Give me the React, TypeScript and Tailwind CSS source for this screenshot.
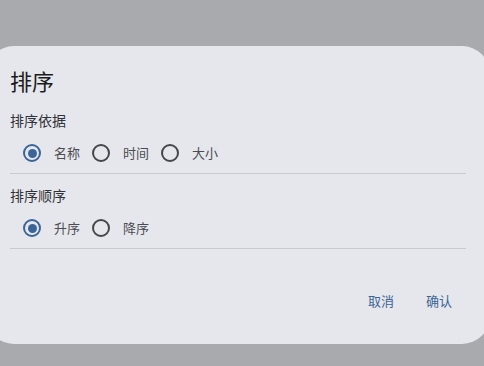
import { useState } from 'react';

const font = { fontFamily: '"Noto Sans CJK SC", "Noto Sans", sans-serif' };

function Radio({ label, checked, onSelect }: { label: string; checked: boolean; onSelect: () => void }) {
  return (
    <button type="button" onClick={onSelect} className="flex items-center h-10">
      <span className="w-10 h-10 flex items-center justify-center">
        <span
          className={
            'w-[18px] h-[18px] rounded-full border-2 flex items-center justify-center ' +
            (checked ? 'border-[#3b6598]' : 'border-[#45474d]')
          }
        >
          {checked && <span className="w-[9px] h-[9px] rounded-full bg-[#3b6598]" />}
        </span>
      </span>
      <span className="text-[13px] leading-5 text-[#4a4c52] w-[28px] pl-[2px] text-left">{label}</span>
    </button>
  );
}

function Section({ title, options, value, onChange }: { title: string; options: string[]; value: string; onChange: (v: string) => void }) {
  return (
    <div>
      <div className="text-[14px] leading-5 text-[#303237]">{title}</div>
      <div className="flex gap-[1px] mt-[3px] ml-[2px]">
        {options.map((o) => (
          <Radio key={o} label={o} checked={value === o} onSelect={() => onChange(o)} />
        ))}
      </div>
      <div className="h-px bg-[#c9cad0]" />
    </div>
  );
}

export default function App() {
  const [by, setBy] = useState('名称');
  const [order, setOrder] = useState('升序');

  return (
    <div className="w-[484px] h-[366px] bg-[#a9aaad] overflow-hidden pt-[46px]" style={font}>
      <div className="ml-[-14px] w-[504px] h-[298px] rounded-[28px] bg-[#e6e7ec] px-6 pt-5 flex flex-col">
        <h2 className="text-[22px] leading-7 text-[#1b1c20]">排序</h2>
        <div className="mt-4">
          <Section title="排序依据" options={['名称', '时间', '大小']} value={by} onChange={setBy} />
        </div>
        <div className="mt-[11px]">
          <Section title="排序顺序" options={['升序', '降序']} value={order} onChange={setOrder} />
        </div>
        <div className="flex justify-end gap-2 mt-[32px] mr-[2px]">
          <button type="button" className="h-10 px-3 text-[13px] text-[#3c6596]">取消</button>
          <button type="button" className="h-10 px-3 text-[13px] text-[#3c6596]">确认</button>
        </div>
      </div>
    </div>
  );
}
